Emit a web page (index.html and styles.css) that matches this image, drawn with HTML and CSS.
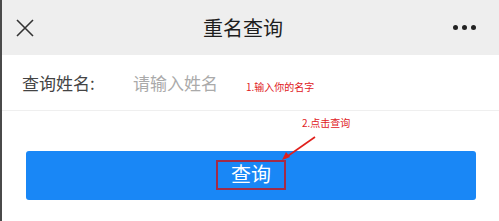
FILE: index.html
```html
<!DOCTYPE html>
<html lang="zh-CN">
<head>
    <meta charset="UTF-8">
    <meta name="viewport" content="width=device-width, initial-scale=1.0">
    <title>重名查询</title>
    <link rel="stylesheet" href="styles.css">
</head>
<body>
    <div class="page">
        <div class="top-bar">
            <span class="close-icon">
                <svg width="18" height="18" viewBox="0 0 18 18">
                    <path d="M1 1 L17 17 M17 1 L1 17" stroke="#333" stroke-width="1.6" fill="none"/>
                </svg>
            </span>
            <h1 class="title">重名查询</h1>
            <span class="more-icon">
                <i></i><i></i><i></i>
            </span>
        </div>

        <div class="form-row">
            <label for="name">查询姓名:</label>
            <input type="text" id="name" placeholder="请输入姓名">
            <span class="note note-one">1.输入你的名字</span>
        </div>

        <div class="actions">
            <button type="button" class="search-button"><span class="mark-box">查询</span></button>
        </div>

        <!-- annotation layer -->
        <span class="note note-two">2.点击查询</span>
        <svg class="arrow" width="499" height="221" viewBox="0 0 499 221">
            <path d="M315 137 L285 158" stroke="#e0201c" stroke-width="1.6" fill="none"/>
            <path d="M282 160 L286 152 L290 157 Z" fill="#e0201c"/>
        </svg>
    </div>
</body>
</html>
```

FILE: styles.css
```css
* {
    box-sizing: border-box;
}
body {
    margin: 0;
    padding: 0;
    background-color: #fff;
    font-family: "Noto Sans CJK SC", "Noto Sans", sans-serif;
}
.page {
    position: relative;
    width: 499px;
    height: 221px;
    border-left: 2px solid #4a4a4a;
    overflow: hidden;
}
.top-bar {
    height: 55px;
    background-color: #eeeeee;
    display: grid;
    grid-template-columns: 1fr auto 1fr;
    align-items: center;
    padding: 0 23px 0 14px;
}
.close-icon {
    display: flex;
    align-items: center;
    height: 18px;
}
.title {
    margin: 0 0 0 -6px;
    font-size: 20px;
    font-weight: 400;
    color: #1e1e1e;
    line-height: 1;
}
.more-icon {
    justify-self: end;
    display: flex;
    gap: 4px;
}
.more-icon i {
    display: block;
    width: 5px;
    height: 5px;
    border-radius: 50%;
    background-color: #222;
}
.form-row {
    position: relative;
    height: 56px;
    display: flex;
    align-items: center;
    padding-left: 20px;
    border-bottom: 1px solid #efefef;
}
.form-row label {
    font-size: 17px;
    color: #444;
    width: 111px;
}
.form-row input {
    border: none;
    outline: none;
    padding: 0;
    font-family: inherit;
    font-size: 17px;
    color: #333;
    width: 110px;
    background: transparent;
}
.form-row input::placeholder {
    color: #aaa;
}
.note {
    position: absolute;
    font-size: 10px;
    color: #e0201c;
    line-height: 1;
    white-space: nowrap;
}
.note-one {
    left: 244px;
    top: 27px;
}
.note-two {
    left: 300px;
    top: 118px;
}
.actions {
    padding: 40px 23px 0 24px;
}
.search-button {
    width: 100%;
    height: 49px;
    border: none;
    border-radius: 3px;
    background-color: #1987f6;
    display: flex;
    justify-content: center;
    align-items: center;
    padding: 0;
    cursor: pointer;
}
.mark-box {
    display: inline-block;
    border: 2px solid #a22c48;
    padding: 0 13px;
    line-height: 26px;
    font-size: 20px;
    color: #fff;
    font-family: inherit;
    margin-top: -2px;
}
.arrow {
    position: absolute;
    left: -2px;
    top: 0;
    pointer-events: none;
}
```
